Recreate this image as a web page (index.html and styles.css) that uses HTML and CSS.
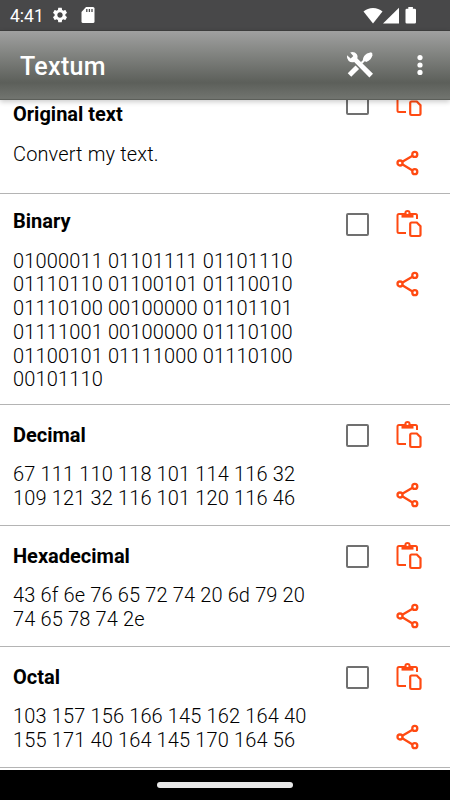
FILE: index.html
```
<!DOCTYPE html>
<html lang="en">
<head>
    <meta charset="UTF-8">
    <meta name="viewport" content="width=device-width, initial-scale=1.0">
    <title>Textum</title>
    <link rel="stylesheet" href="styles.css">
</head>
<body>
    <!-- Shared icons -->
    <svg class="sprite">
        <symbol id="icon-paste" viewBox="0 0 28 30">
            <path d="M22 10V6.500q0-1.500-1.500-1.500H4Q2.500 5 2.500 6.500V22.500q0 1.500 1.500 1.500H11" fill="none" stroke="currentColor" stroke-width="2"/>
            <path d="M6.500 4.500h12v4.100H6.500z" fill="currentColor"/>
            <circle cx="12.500" cy="4" r="2.100" fill="#fff" stroke="currentColor" stroke-width="2"/>
            <path d="M16.600 13.500h5.200l3.700 3.800V25.600q0 1.400-1.400 1.400h-7.500q-1.400 0-1.400-1.400v-10.700q0-1.400 1.400-1.400z" fill="none" stroke="currentColor" stroke-width="2.200"/>
        </symbol>
        <symbol id="icon-share" viewBox="0 0 28 30">
            <g fill="none" stroke="currentColor" stroke-width="2.300">
                <path d="M7.300 13.700 17.500 7.700M7.300 16.300 17.500 22.400"/>
                <circle cx="5" cy="15" r="2.500"/>
                <circle cx="19.800" cy="6.400" r="2.500"/>
                <circle cx="19.800" cy="23.700" r="2.500"/>
            </g>
        </symbol>
    </svg>

    <div class="screen">
        <div class="status-bar">
            <span class="clock">4:41</span>
            <svg class="gear" width="18" height="18" viewBox="0 0 24 24"><path fill="#fff" d="M19.14 12.94c.04-.3.06-.61.06-.94s-.02-.64-.07-.94l2.03-1.58c.18-.14.23-.41.12-.61l-1.92-3.32c-.12-.22-.37-.29-.59-.22l-2.39.96c-.5-.38-1.03-.7-1.62-.94l-.36-2.54c-.04-.24-.24-.41-.48-.41h-3.84c-.24 0-.43.17-.47.41l-.36 2.54c-.59.24-1.13.57-1.62.94l-2.39-.96c-.22-.08-.47 0-.59.22L2.740 8.870c-.12.21-.08.47.12.61l2.030 1.580c-.05.3-.09.63-.09.94s.02.64.07.94l-2.030 1.580c-.18.14-.23.41-.12.61l1.920 3.320c.12.22.37.29.59.22l2.390-.96c.5.38 1.030.7 1.620.94l.36 2.540c.05.24.24.41.48.41h3.840c.24 0 .44-.17.47-.41l.36-2.540c.59-.24 1.130-.56 1.620-.94l2.390.96c.22.08.47 0 .59-.22l1.920-3.320c.12-.22.07-.47-.12-.61l-2.010-1.580zM12 15.600c-1.980 0-3.600-1.620-3.600-3.600s1.620-3.600 3.600-3.600 3.600 1.620 3.600 3.600-1.620 3.600-3.600 3.600z"/></svg>
            <svg class="sd-card" width="14" height="16" viewBox="0 0 14 16"><path fill="#fff" d="M5 0h7q1.500 0 1.500 1.500v13q0 1.500-1.500 1.500H2Q.5 16 .5 14.500V5z"/><path d="M5.800 2v3M8.400 2v3M11 2v3" stroke="#484849" stroke-width="1.300"/></svg>
            <span class="spacer"></span>
            <svg width="20" height="17" viewBox="0 0 20 17"><path fill="#fff" d="M10 16.500.5 4.600Q4.500 1 10 1t9.500 3.600z"/></svg>
            <svg width="16" height="17" viewBox="0 0 16 17"><path fill="#fff" d="M0 16.500 16 .8v15.700z"/></svg>
            <svg class="battery" width="12" height="17" viewBox="0 0 12 17"><path fill="#fff" d="M3.300 0h4.600v1.800h1.800q1.300 0 1.300 1.300v12.200q0 1.200-1.300 1.200H1.800Q.5 16.500.5 15.300V3.100q0-1.300 1.300-1.300h1.500z"/></svg>
        </div>

        <header class="app-bar">
            <h1>Textum</h1>
            <svg class="tools" width="28" height="28" viewBox="0 0 28 28">
                <path d="M3.500 24 11.300 16.300" stroke="#fff" stroke-width="5"/>
                <path d="M15.500 12 19 8.500" stroke="#fff" stroke-width="2.200"/>
                <path fill="#fff" d="M16.800 8.800Q17.500 4.500 21 2.500L25 1.300q1.800.7 1.400 3-.8 4.500-6.200 6.700z"/>
                <path fill="#fff" d="M1 4.200 4.700 7.500 7.300 4.900 4.200 1.400Q8.500.3 10.800 3.200q1.400 1.900.6 4.300L27 22.800l-3.600 3.600L8.200 11Q5 12 2.700 10 .4 7.800 1 4.200z"/>
            </svg>
            <svg class="more" width="6" height="20" viewBox="0 0 6 20"><g fill="#fff"><circle cx="3" cy="2.600" r="2.600"/><circle cx="3" cy="10" r="2.600"/><circle cx="3" cy="17.400" r="2.600"/></g></svg>
        </header>

        <main class="list">
            <section class="item">
                <div class="text">
                    <h2>Original text</h2>
                    <p>Convert my text.</p>
                </div>
                <span class="checkbox"></span>
                <div class="actions">
                    <svg class="icon"><use href="#icon-paste"/></svg>
                    <svg class="icon"><use href="#icon-share"/></svg>
                </div>
            </section>

            <section class="item">
                <div class="text">
                    <h2>Binary</h2>
                    <p>01000011 01101111 01101110 01110110 01100101 01110010 01110100 00100000 01101101 01111001 00100000 01110100 01100101 01111000 01110100 00101110</p>
                </div>
                <span class="checkbox"></span>
                <div class="actions">
                    <svg class="icon"><use href="#icon-paste"/></svg>
                    <svg class="icon"><use href="#icon-share"/></svg>
                </div>
            </section>

            <section class="item">
                <div class="text">
                    <h2>Decimal</h2>
                    <p>67 111 110 118 101 114 116 32 109 121 32 116 101 120 116 46</p>
                </div>
                <span class="checkbox"></span>
                <div class="actions">
                    <svg class="icon"><use href="#icon-paste"/></svg>
                    <svg class="icon"><use href="#icon-share"/></svg>
                </div>
            </section>

            <section class="item">
                <div class="text">
                    <h2>Hexadecimal</h2>
                    <p>43 6f 6e 76 65 72 74 20 6d 79 20 74 65 78 74 2e</p>
                </div>
                <span class="checkbox"></span>
                <div class="actions">
                    <svg class="icon"><use href="#icon-paste"/></svg>
                    <svg class="icon"><use href="#icon-share"/></svg>
                </div>
            </section>

            <section class="item">
                <div class="text">
                    <h2>Octal</h2>
                    <p>103 157 156 166 145 162 164 40 155 171 40 164 145 170 164 56</p>
                </div>
                <span class="checkbox"></span>
                <div class="actions">
                    <svg class="icon"><use href="#icon-paste"/></svg>
                    <svg class="icon"><use href="#icon-share"/></svg>
                </div>
            </section>
        </main>

        <footer class="nav-bar"><span class="handle"></span></footer>
    </div>
</body>
</html>
```
FILE: styles.css
```
* {
    margin: 0;
    padding: 0;
    box-sizing: border-box;
}

body {
    font-family: Roboto, "Liberation Sans", sans-serif;
    background: #fff;
    color: #000;
}

.sprite {
    display: none;
}

.screen {
    width: 450px;
    height: 800px;
    display: flex;
    flex-direction: column;
    overflow: hidden;
}

svg {
    display: block;
    flex: none;
}

.status-bar {
    flex: none;
    height: 30px;
    padding: 0 33px 0 10px;
    display: flex;
    align-items: center;
    background: #484849;
    color: #fff;
}

.clock {
    width: 41px;
    font-size: 17.5px;
    line-height: 30px;
    padding-top: 1px;
}

.sd-card {
    margin-left: 12px;
}

.spacer {
    flex: 1;
}

.battery {
    margin-left: 6px;
}

.app-bar {
    flex: none;
    height: 70px;
    padding: 0 27px 0 20px;
    display: flex;
    align-items: center;
    background: linear-gradient(#a0a0a0 0%, #858784 30%, #5c5f5a 76%, #70736e 98%);
    border-top: 1px solid #3c3c3c;
    border-bottom: 1px solid #5c5f5a;
    box-shadow: 0 2px 5px rgba(0, 0, 0, 0.2);
    color: #fff;
    z-index: 1;
    position: relative;
}

.app-bar h1 {
    flex: 1;
    font-size: 25px;
    font-weight: 500;
    letter-spacing: 0.3px;
    padding-top: 2px;
}

.more {
    margin-left: 43px;
}

.list {
    flex: 1;
    min-height: 0;
    overflow: hidden;
}

.item {
    min-height: 121px;
    display: flex;
    border-bottom: 1px solid #b4b4b4;
}

/* the list is scrolled a little, so the first row starts under the app bar */
.item:first-child {
    margin-top: -27px;
}

.text {
    width: 333px;
    padding: 0 20px 0 13px;
    align-self: center;
}

.text h2 {
    font-size: 20px;
    font-weight: 700;
    line-height: 24px;
    margin: 15px 0 16.5px;
}

.text p {
    font-size: 20px;
    font-weight: 300;
    letter-spacing: 0.14px;
    line-height: 23.8px;
    margin-bottom: 12px;
}

.checkbox {
    width: 23px;
    height: 23px;
    margin: 19px 0 0 13px;
    border: 2px solid #707070;
    border-radius: 2px;
}

.actions {
    margin: 15px 0 0 26px;
    display: flex;
    flex-direction: column;
    gap: 30px;
}

.icon {
    width: 28px;
    height: 30px;
    color: #ff4a12;
}

.nav-bar {
    flex: none;
    height: 30px;
    display: flex;
    align-items: center;
    justify-content: center;
    background: #000;
}

.handle {
    width: 136px;
    height: 6px;
    border-radius: 3px;
    background: #e8e8e8;
}
```
